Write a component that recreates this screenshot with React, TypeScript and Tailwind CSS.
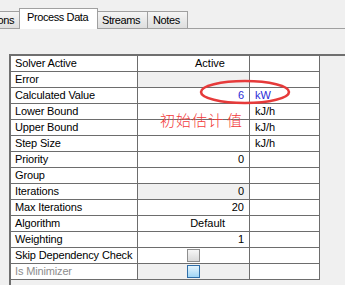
import { ReactNode } from "react";

type Row = {
  label: string;
  value?: ReactNode;
  unit?: string;
  grey?: boolean;
  dim?: boolean;
  blue?: boolean;
};

function Check(props: { active?: boolean }) {
  return (
    <span
      className={
        props.active
          ? "block w-[13px] h-[13px] border border-[#2f6ea8] bg-linear-to-b from-[#e4f4fd] to-[#9fd5f5]"
          : "block w-[13px] h-[13px] border border-[#8e8e8e] bg-linear-to-b from-[#f6f6f6] to-[#d9d9d9]"
      }
    />
  );
}

const rows: Row[] = [
  { label: "Solver Active", value: <span className="pr-[19px]">Active</span> },
  { label: "Error", grey: true },
  { label: "Calculated Value", value: "6", unit: "kW", blue: true },
  { label: "Lower Bound", unit: "kJ/h" },
  { label: "Upper Bound", unit: "kJ/h" },
  { label: "Step Size", unit: "kJ/h" },
  { label: "Priority", value: "0" },
  { label: "Group" },
  { label: "Iterations", value: "0", grey: true },
  { label: "Max Iterations", value: "20" },
  { label: "Algorithm", value: <span className="pr-[19px]">Default</span> },
  { label: "Weighting", value: "1" },
  { label: "Skip Dependency Check", value: <Check /> },
  { label: "Is Minimizer", value: <Check active />, grey: true, dim: true },
];

export default function App() {
  return (
    <div className="relative w-[345px] h-[285px] overflow-hidden bg-[#f0f0f0] font-['Liberation_Sans',Arial,sans-serif] text-[11px] text-black">
      {/* tab strip */}
      <div className="flex items-end h-[29px] border-b border-[#a0a0a0] tracking-[-0.4px] leading-[13px]">
        <div className="w-[19px] h-[17px] overflow-hidden flex justify-end border-t border-[#a0a0a0] bg-linear-to-b from-[#f5f5f5] to-[#dedede] pr-[5px] pt-[2px]">
          <span className="shrink-0 whitespace-nowrap">ons</span>
        </div>
        <div className="relative z-10 w-[79px] h-[21px] -mb-px bg-white border border-b-0 border-[#a0a0a0] pl-[7px] pt-[2px]">
          Process Data
        </div>
        <div className="w-[50px] h-[17px] border-t border-r border-[#a0a0a0] bg-linear-to-b from-[#f5f5f5] to-[#dedede] pl-[4px] pt-[2px]">
          Streams
        </div>
        <div className="w-[40px] h-[17px] border-t border-r border-[#a0a0a0] bg-linear-to-b from-[#f5f5f5] to-[#dedede] pl-[5px] pt-[2px]">
          Notes
        </div>
      </div>

      {/* property grid */}
      <div className="pl-[9px] pt-[25px]">
        <div className="h-[300px] border-t-2 border-l-2 border-[#6f6f6f] leading-[15px]">
          {rows.map((r) => (
            <div key={r.label} className="flex w-[309px] h-[16px] border-b border-[#6d6d6d] bg-white">
              <div className={`w-[127px] border-r border-[#6d6d6d] pl-[4px] whitespace-nowrap tracking-[-0.15px] ${r.dim ? "text-[#8d8d8d]" : ""}`}>
                {r.label}
              </div>
              <div
                className={`w-[112px] border-r border-[#6d6d6d] flex items-center pr-[5px] ${
                  typeof r.value === "string" ? "justify-end" : r.label.startsWith("Skip") || r.dim ? "justify-center pl-[5px]" : "justify-end"
                } ${r.grey ? "bg-[#f0f0f0]" : ""} ${r.blue ? "text-[#2b2bd6]" : ""}`}
              >
                {r.value}
              </div>
              <div className={`w-[70px] border-r border-[#6d6d6d] pl-[5px] ${r.blue ? "text-[#2b2bd6]" : ""}`}>
                {r.unit}
              </div>
            </div>
          ))}
        </div>
      </div>

      {/* annotation */}
      <svg className="absolute left-[198px] top-[78px]" width="94" height="28" viewBox="0 0 94 28">
        <ellipse cx="47" cy="14" rx="44" ry="11" fill="none" stroke="#e63a3a" strokeWidth="2.6" />
      </svg>
      <div className="absolute left-[160px] top-[112px] text-[15px] leading-[15px] tracking-[1px] text-[#f23b3b] font-['Noto_Sans_CJK_SC',sans-serif] font-light">
        初始估计<span className="ml-[3px]">值</span>
      </div>
    </div>
  );
}
